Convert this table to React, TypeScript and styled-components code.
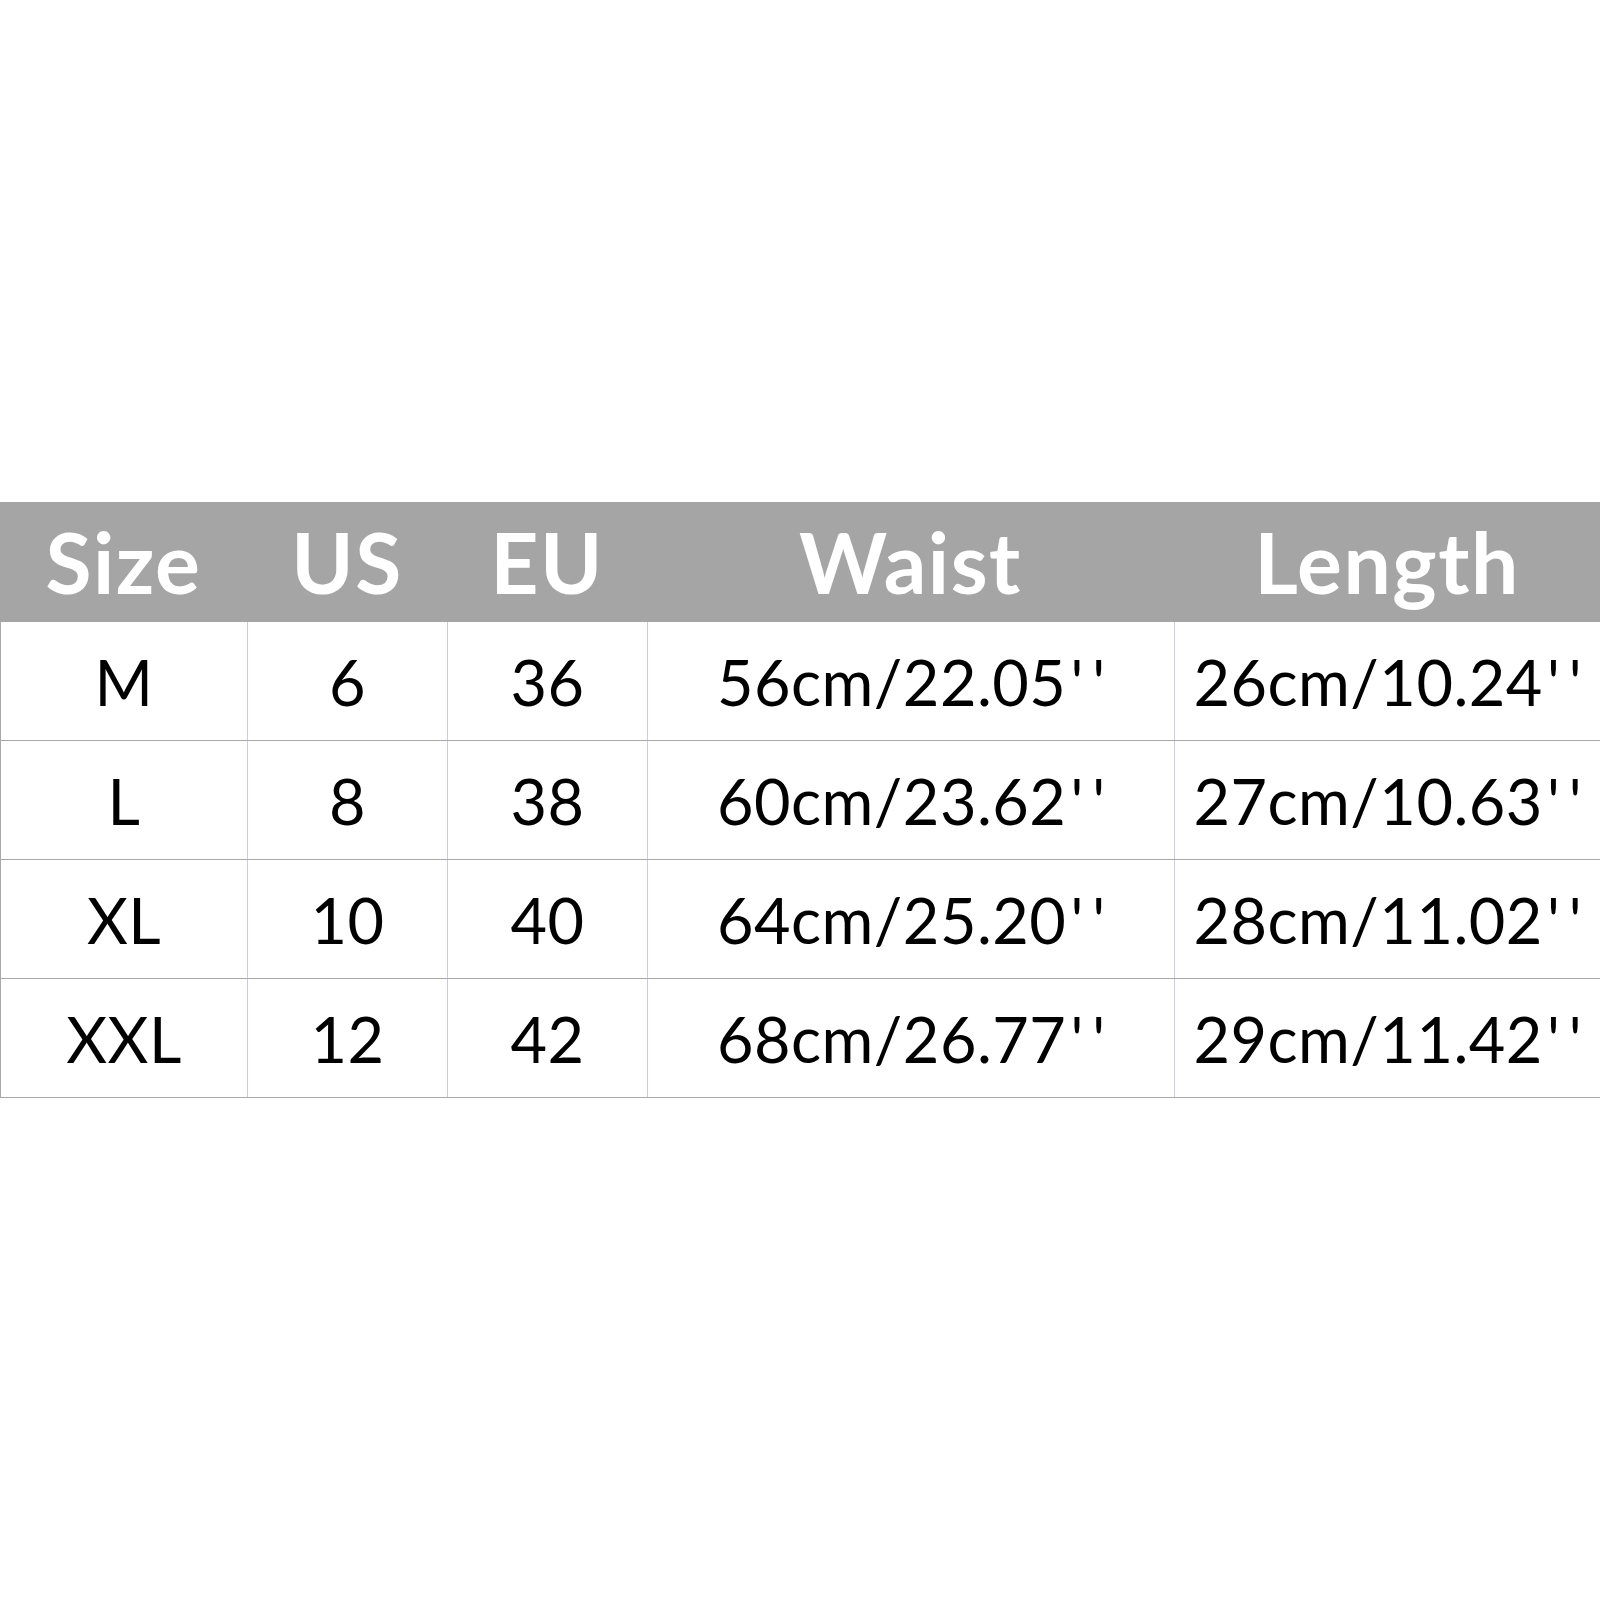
import React from "react";
import styled, { createGlobalStyle } from "styled-components";

const Global = createGlobalStyle`
  html, body { margin: 0; padding: 0; background: #ffffff; }
  body { font-family: Lato, "Noto Sans", sans-serif; }
`;

const Page = styled.div`
  width: 1600px;
  height: 1600px;
  display: flex;
  flex-direction: column;
  justify-content: center;
  overflow: hidden;
`;

const Table = styled.div`
  display: flex;
  flex-direction: column;
  width: 1600px;
`;

const cols = "247px 200px 200px 527px 1fr";

const HeaderRow = styled.div`
  display: grid;
  grid-template-columns: ${cols};
  height: 120px;
  background: #a5a5a5;
`;

const HeadCell = styled.div`
  display: flex;
  align-items: center;
  justify-content: center;
  color: #ffffff;
  font-family: Lato, "Noto Sans", sans-serif;
  font-weight: 700;
  font-size: 84px;
  letter-spacing: 1.5px;
  padding-bottom: 2px;
`;

const Row = styled.div`
  display: grid;
  grid-template-columns: ${cols};
  height: 118px;
  border-bottom: 1px solid #a9a9a9;
`;

const Cell = styled.div<{ $first?: boolean }>`
  display: flex;
  align-items: center;
  justify-content: center;
  color: #000000;
  font-family: Lato, "Noto Sans", sans-serif;
  font-size: 63px;
  letter-spacing: 0.5px;
  border-left: 1px solid ${(p) => (p.$first ? "#a9a9a9" : "#c6cde2")};
`;

const Inch = styled.span`
  letter-spacing: 9px;
  margin-left: 4px;
  margin-right: -9px;
`;

const headers = ["Size", "US", "EU", "Waist", "Length"];
const rows = [
  ["M", "6", "36", "56cm/22.05", "26cm/10.24"],
  ["L", "8", "38", "60cm/23.62", "27cm/10.63"],
  ["XL", "10", "40", "64cm/25.20", "28cm/11.02"],
  ["XXL", "12", "42", "68cm/26.77", "29cm/11.42"],
];

export default function App() {
  return (
    <>
      <Global />
      <Page>
        <Table>
          <HeaderRow>
            {headers.map((h) => (
              <HeadCell key={h}>{h}</HeadCell>
            ))}
          </HeaderRow>
          {rows.map((r) => (
            <Row key={r[0]}>
              {r.map((c, i) => (
                <Cell key={i} $first={i === 0}>
                  {c}
                  {i >= 3 && <Inch>''</Inch>}
                </Cell>
              ))}
            </Row>
          ))}
        </Table>
      </Page>
    </>
  );
}
